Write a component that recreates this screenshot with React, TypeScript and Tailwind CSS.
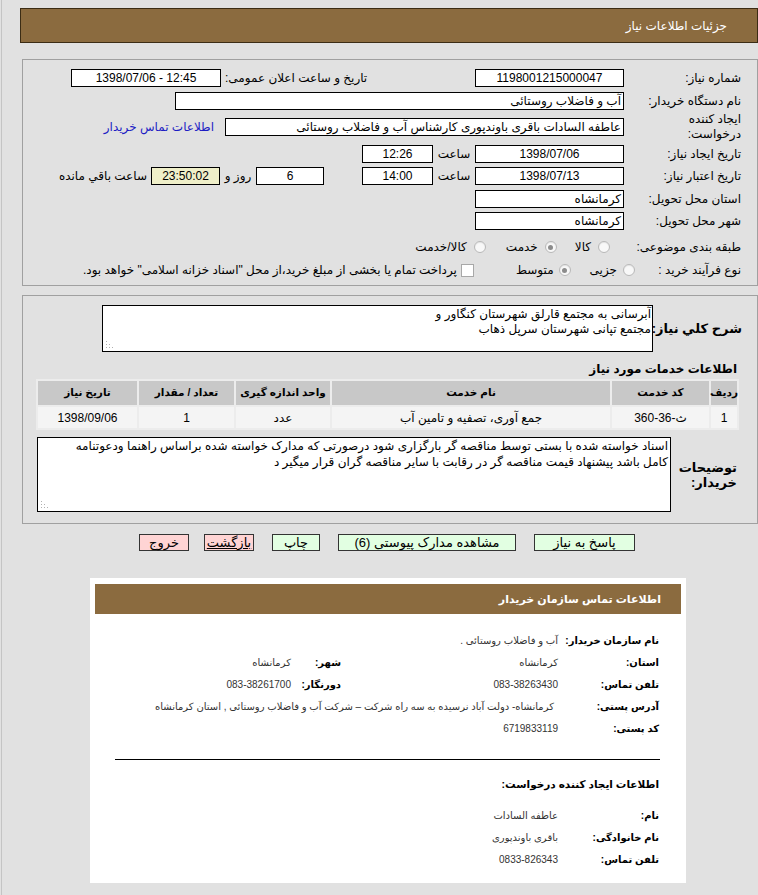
import React from "react";

const Label = ({ children, w = "w-[133px]" }: { children: React.ReactNode; w?: string }) => (
  <div className={`${w} shrink-0 pr-[16px] text-right whitespace-nowrap`}>{children}</div>
);

const Box = ({
  children,
  className = "",
}: {
  children?: React.ReactNode;
  className?: string;
}) => (
  <div
    className={`h-[18px] shrink-0 border border-black flex items-center leading-none whitespace-nowrap ${className}`}
  >
    {children}
  </div>
);

const Radio = ({ checked = false }: { checked?: boolean }) => (
  <span className="w-[12px] h-[12px] shrink-0 rounded-full border border-[#b8b8b8] bg-[#f8f8f8] flex items-center justify-center shadow-[inset_0_1px_1px_rgba(0,0,0,0.08)]">
    {checked && <span className="w-[5px] h-[5px] rounded-full bg-[#8c8c8c]" />}
  </span>
);

const Grip = () => (
  <svg className="absolute left-[2px] bottom-[2px]" width="9" height="9" viewBox="0 0 9 9">
    <g fill="#b0b0b0">
      <rect x="1" y="7" width="1" height="1" />
      <rect x="4" y="7" width="1" height="1" />
      <rect x="7" y="7" width="1" height="1" />
      <rect x="1" y="4" width="1" height="1" />
      <rect x="4" y="4" width="1" height="1" />
      <rect x="1" y="1" width="1" height="1" />
    </g>
  </svg>
);

const Btn = ({
  children,
  w,
  pink = false,
  underline = false,
}: {
  children: React.ReactNode;
  w: string;
  pink?: boolean;
  underline?: boolean;
}) => (
  <div
    className={`${w} h-[17px] shrink-0 border border-[#333] flex items-center justify-center leading-none text-[13px] whitespace-nowrap ${
      pink ? "bg-[#ffd4d4]" : "bg-[#e2ffe2]"
    } ${underline ? "underline" : ""}`}
  >
    {children}
  </div>
);

const CRow = ({
  label,
  value,
  label2,
  value2,
}: {
  label: string;
  value: React.ReactNode;
  label2?: string;
  value2?: React.ReactNode;
}) => (
  <div className="flex items-center h-[22px]">
    <div className="w-[128px] shrink-0 pr-[27px] font-bold text-[10px] text-black whitespace-nowrap">
      {label}
    </div>
    <div className="w-[217px] shrink-0 text-[#333] text-[10px] whitespace-nowrap">{value}</div>
    {label2 && (
      <div className="w-[50px] shrink-0 font-bold text-[10px] text-black whitespace-nowrap">{label2}</div>
    )}
    {value2 && <div className="text-[#333] text-[10px] whitespace-nowrap">{value2}</div>}
  </div>
);

export default function App() {
  return (
    <div
      dir="rtl"
      className="w-[758px] h-[895px] overflow-hidden bg-[#e1e1e1] text-[12px] text-black font-['Liberation_Sans','DejaVu_Sans',sans-serif]"
    >
      <div className="ml-[3px] border-l border-[#c4c4c4] h-full w-[757px]">
        <div className="pl-[18px] pt-[8px] w-[756px]">
          {/* Header */}
          <div className="h-[35px] border border-[#3b2c14] bg-[#8b6b3f] flex items-center pr-[30px] text-white text-[12px]">
            جزئیات اطلاعات نیاز
          </div>

          {/* Box 1 */}
          <div className="mt-[16px] ml-[2px] h-[227px] border border-[#a0a0a0]">
            <div className="flex items-center h-[18px] mt-[9px]">
              <Label>شماره نیاز:</Label>
              <Box className="w-[149px] justify-center bg-white">1198001215000047</Box>
              <div className="w-[254px] shrink-0 text-left pl-[4px] whitespace-nowrap">تاریخ و ساعت اعلان عمومی:</div>
              <Box className="w-[150px] justify-center bg-white">
                <span dir="ltr">1398/07/06 - 12:45</span>
              </Box>
            </div>

            <div className="flex items-center h-[18px] mt-[5px]">
              <Label>نام دستگاه خریدار:</Label>
              <Box className="w-[449px] pr-[2px] bg-white">آب و فاضلاب روستائی</Box>
            </div>

            <div className="flex items-center h-[28px] mt-[3px]">
              <Label>
                <div className="leading-[15px]">
                  ایجاد کننده
                  <br />
                  درخواست:
                </div>
              </Label>
              <Box className="w-[399px] pr-[2px] bg-white">
                عاطفه السادات باقری باوندپوری کارشناس آب و فاضلاب روستائی
              </Box>
              <span className="mr-[11px] text-[#1c1cc4] whitespace-nowrap">اطلاعات تماس خریدار</span>
            </div>

            <div className="flex items-center h-[18px] mt-[4px]">
              <Label>تاریخ ایجاد نیاز:</Label>
              <Box className="w-[149px] justify-center bg-white">1398/07/06</Box>
              <div className="w-[42px] shrink-0 text-center">ساعت</div>
              <Box className="w-[71px] justify-center bg-white">12:26</Box>
            </div>

            <div className="flex items-center h-[18px] mt-[4px]">
              <Label>تاریخ اعتبار نیاز:</Label>
              <Box className="w-[149px] justify-center bg-white">1398/07/13</Box>
              <div className="w-[42px] shrink-0 text-center">ساعت</div>
              <Box className="w-[71px] justify-center bg-white">14:00</Box>
              <div className="w-[38px] shrink-0" />
              <Box className="w-[68px] justify-center bg-white">6</Box>
              <div className="w-[36px] shrink-0 text-center whitespace-nowrap">روز و</div>
              <Box className="w-[69px] justify-center bg-[#efefc9]">23:50:02</Box>
              <span className="mr-[4px] whitespace-nowrap">ساعت باقي مانده</span>
            </div>

            <div className="flex items-center h-[18px] mt-[5px]">
              <Label>استان محل تحویل:</Label>
              <Box className="w-[149px] pr-[2px] bg-white">کرمانشاه</Box>
            </div>

            <div className="flex items-center h-[18px] mt-[4px]">
              <Label>شهر محل تحویل:</Label>
              <Box className="w-[149px] pr-[2px] bg-white">کرمانشاه</Box>
            </div>

            <div className="flex items-center h-[18px] mt-[8px]">
              <Label>طبقه بندی موضوعی:</Label>
              <span className="mr-[14px]">
                <Radio />
              </span>
              <span className="mr-[7px]">کالا</span>
              <span className="mr-[18px]">
                <Radio checked />
              </span>
              <span className="mr-[7px]">خدمت</span>
              <span className="mr-[20px]">
                <Radio />
              </span>
              <span className="mr-[7px]">کالا/خدمت</span>
            </div>

            <div className="flex items-center h-[18px] mt-[5px]">
              <Label w="w-[122px]">نوع فرآیند خرید :</Label>
              <Radio />
              <span className="mr-[6px]">جزیی</span>
              <span className="mr-[19px]">
                <Radio checked />
              </span>
              <span className="mr-[5px]">متوسط</span>
              <span className="mr-[42px] w-[13px] h-[13px] shrink-0 border border-[#a8a8a8] bg-white" />
              <span className="mr-[4px] whitespace-nowrap">
                پرداخت تمام یا بخشی از مبلغ خرید،از محل "اسناد خزانه اسلامی" خواهد بود.
              </span>
            </div>
          </div>

          {/* Box 2 */}
          <div className="mt-[9px] ml-[2px] h-[229px] border border-[#a0a0a0]">
            <div className="flex items-center mt-[9px]">
              <div className="w-[104px] shrink-0 pr-[15px] font-bold text-[13px] whitespace-nowrap">
                شرح کلي نياز:
              </div>
              <div className="relative w-[551px] h-[47px] shrink-0 border border-black bg-white pr-[1px] pt-[1px] leading-[15px]">
                <div>آبرسانی به مجتمع قارلق شهرستان کنگاور و</div>
                <div>مجتمع تپانی شهرستان سرپل ذهاب</div>
                <Grip />
              </div>
            </div>

            <div className="mt-[9px] h-[16px] leading-[16px] pr-[20px] font-bold text-[12px]">
              اطلاعات خدمات مورد نیاز
            </div>

            <div className="mt-[2px] mr-[18px] w-[703px] bg-[#ececec] p-[2px] grid grid-cols-[26px_97px_278px_94px_95px_99px] gap-[2px]">
              {["ردیف", "کد خدمت", "نام خدمت", "واحد اندازه گیری", "تعداد / مقدار", "تاریخ نیاز"].map((h) => (
                <div
                  key={h}
                  className="h-[24px] bg-[#c8c8c8] flex items-center justify-center font-bold text-[10.5px] whitespace-nowrap"
                >
                  {h}
                </div>
              ))}
              <div className="h-[21px] bg-[#f4f4f4] flex items-center justify-center">1</div>
              <div className="h-[21px] bg-[#f4f4f4] flex items-center justify-center">
                <span dir="ltr">360-36-ث</span>
              </div>
              <div className="h-[21px] bg-[#f4f4f4] flex items-center justify-center">جمع آوری، تصفیه و تامین آب</div>
              <div className="h-[21px] bg-[#f4f4f4] flex items-center justify-center">عدد</div>
              <div className="h-[21px] bg-[#f4f4f4] flex items-center justify-center">1</div>
              <div className="h-[21px] bg-[#f4f4f4] flex items-center justify-center">1398/09/06</div>
            </div>

            <div className="flex items-center mt-[7px]">
              <div className="w-[86px] shrink-0 pr-[20px] font-bold text-[13px] leading-[15px]">
                توضیحات
                <br />
                خریدار:
              </div>
              <div className="relative w-[634px] h-[75px] shrink-0 border border-black bg-white pr-[2px] leading-[16px] whitespace-nowrap overflow-hidden">
                <div>
                  اسناد خواسته شده با بستی توسط مناقصه گر بارگزاری شود درصورتی که مدارک خواسته شده براساس راهنما ودعوتنامه
                </div>
                <div>کامل باشد پیشنهاد قیمت مناقصه گر در رقابت با سایر مناقصه گران قرار میگیر د</div>
                <Grip />
              </div>
            </div>
          </div>

          {/* Buttons */}
          <div className="mt-[10px] flex items-center pr-[123px] gap-[18px]">
            <Btn w="w-[101px]">پاسخ به نیاز</Btn>
            <Btn w="w-[178px]">مشاهده مدارک پیوستی (6)</Btn>
            <Btn w="w-[48px]">چاپ</Btn>
            <Btn w="w-[50px]" pink underline>
              بازگشت
            </Btn>
            <div className="-mr-[3px]">
              <Btn w="w-[50px]" pink>
                خروج
              </Btn>
            </div>
          </div>

          {/* Contact panel */}
          <div className="mt-[27px] mr-[72px] w-[596px] h-[305px] bg-white pt-[6px]">
            <div className="mx-[5px] h-[30px] bg-[#8b6b3f] flex items-center pr-[20px] text-white font-bold text-[11px]">
              اطلاعات تماس سازمان خریدار
            </div>
            <div className="mt-[15px]">
              <CRow label="نام سازمان خریدار:" value="آب و فاضلاب روستائی ." />
              <CRow label="استان:" value="کرمانشاه" label2="شهر:" value2="کرمانشاه" />
              <CRow
                label="تلفن تماس:"
                value={<span dir="ltr">083-38263430</span>}
                label2="دورنگار:"
                value2={<span dir="ltr">083-38261700</span>}
              />
              <div className="flex items-center h-[22px]">
                <div className="w-[128px] shrink-0 pr-[27px] font-bold text-[10px] whitespace-nowrap">آدرس پستی:</div>
                <div className="pr-[4px] text-[#333] text-[10px] whitespace-nowrap">
                  کرمانشاه- دولت آباد نرسیده به سه راه شرکت – شرکت آب و فاضلاب روستائی , استان کرمانشاه
                </div>
              </div>
              <CRow label="کد پستی:" value="6719833119" />
            </div>
            <div className="mt-[20px] h-px bg-black ml-[25px] mr-[26px]" />
            <div className="mt-[15px] h-[20px] flex items-center pr-[27px] font-bold text-[10.5px]">
              اطلاعات ایجاد کننده درخواست:
            </div>
            <div className="mt-[9px]">
              <CRow label="نام:" value="عاطفه السادات" />
              <CRow label="نام خانوادگی:" value="باقری باوندپوری" />
              <CRow label="تلفن تماس:" value={<span dir="ltr">0833-826343</span>} />
            </div>
          </div>
        </div>
      </div>
    </div>
  );
}
